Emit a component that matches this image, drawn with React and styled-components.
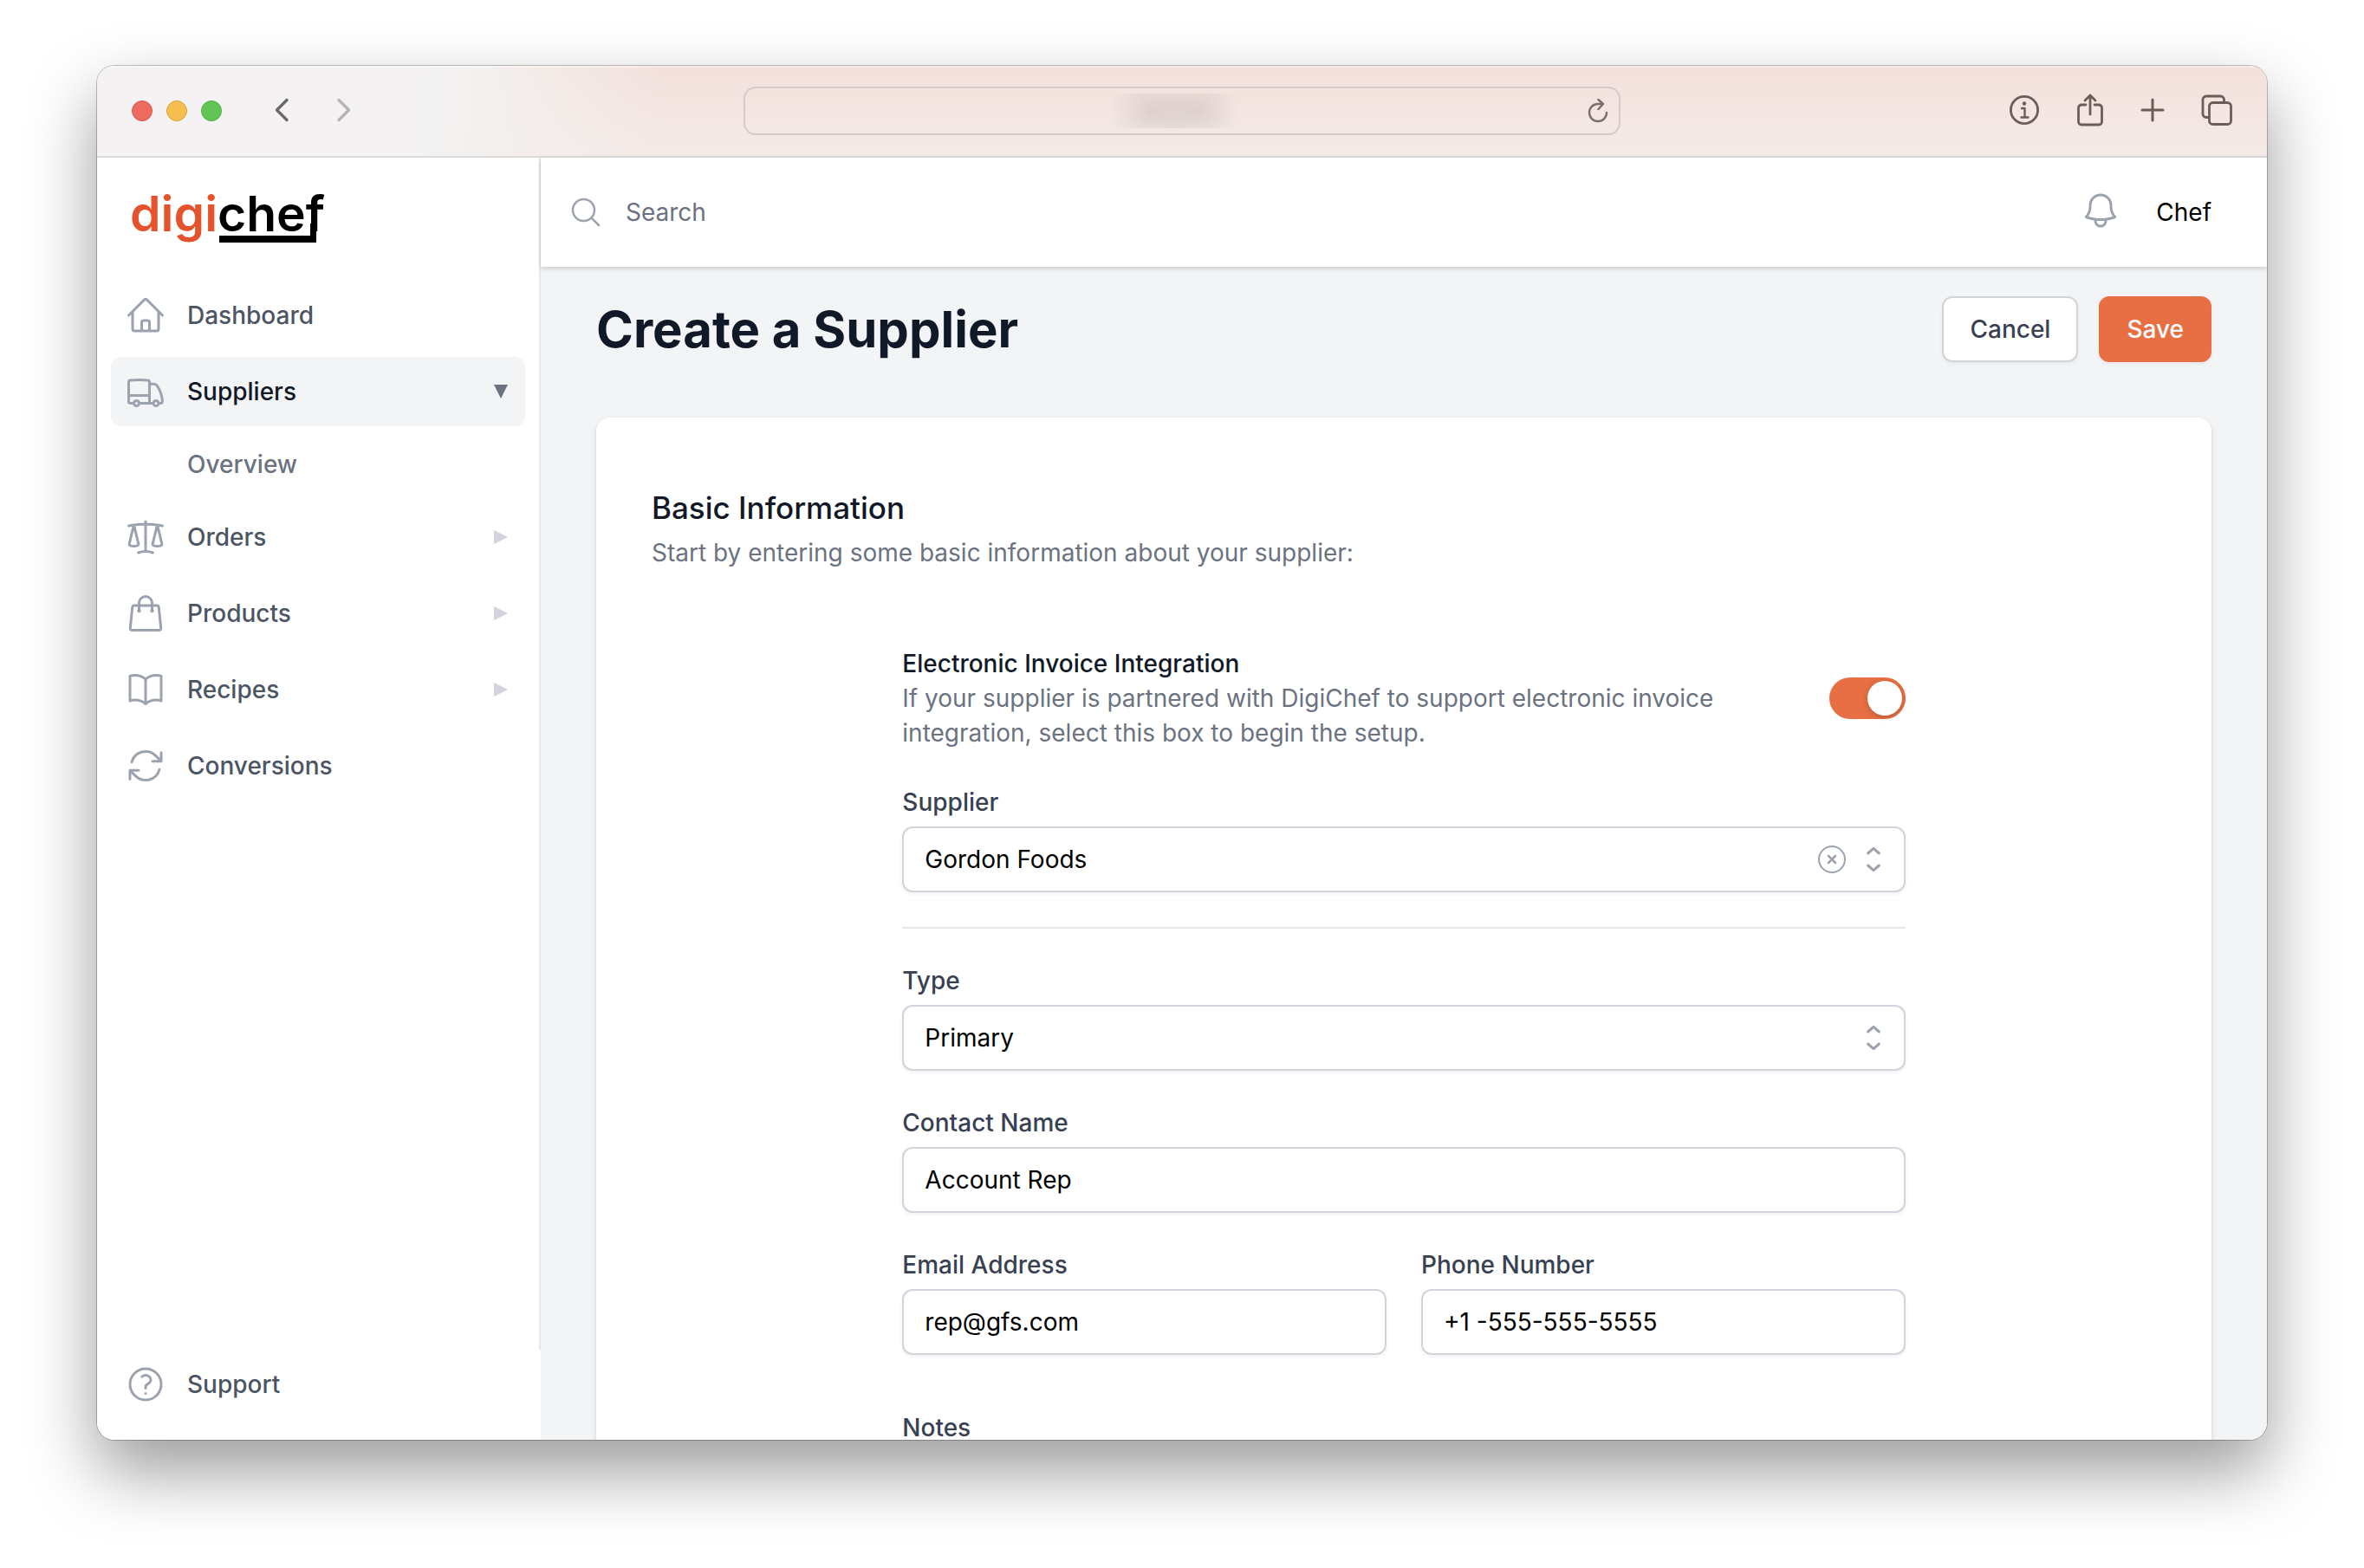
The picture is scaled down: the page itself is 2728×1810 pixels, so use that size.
import React, { useState } from 'react';
import styled, { createGlobalStyle } from 'styled-components';
import {
	HiOutlineArrowPath,
	HiOutlineBell,
	HiOutlineBookOpen,
	HiOutlineHome,
	HiOutlineMagnifyingGlass,
	HiOutlineQuestionMarkCircle,
	HiOutlineScale,
	HiOutlineShoppingBag,
	HiOutlineTruck,
} from 'react-icons/hi2';

const navItems = [
	{ name: 'Dashboard', icon: HiOutlineHome },
	{ name: 'Suppliers', icon: HiOutlineTruck, children: ['Overview'] },
	{ name: 'Orders', icon: HiOutlineScale, children: [] },
	{ name: 'Products', icon: HiOutlineShoppingBag, children: [] },
	{ name: 'Recipes', icon: HiOutlineBookOpen, children: [] },
	{ name: 'Conversions', icon: HiOutlineArrowPath },
];

const Logo = () => (
	<svg width='240' height='80' viewBox='-8 -12 240 80' role='img' aria-label='digichef'>
		<g fontFamily='Inter, sans-serif' fontWeight='600' fontSize='57'>
			<text x='-2' y='49' fill='#e5532d'>
				digi
			</text>
			<text x='99' y='49' fill='#000'>
				chef
			</text>
		</g>
		<path d='M101 54h105V40h7v22H101z' fill='#000' />
	</svg>
);

const Selector = () => (
	<svg
		width='40'
		height='40'
		viewBox='0 0 20 20'
		fill='none'
		stroke='currentColor'
		strokeWidth='1.5'
		strokeLinecap='round'
		strokeLinejoin='round'
		aria-hidden='true'
	>
		<path d='M6.8 6.5 10 3.7l3.2 2.8M6.8 13.5l3.2 2.8 3.2-2.8' />
	</svg>
);

const BrowserBar = () => (
	<Toolbar>
		<ToolGroup>
			<Lights>
				<Light $color='#ec6a5f' $edge='#d5574c' />
				<Light $color='#f5bf4f' $edge='#d8a13c' />
				<Light $color='#61c554' $edge='#50a845' />
			</Lights>
			<History>
				<ToolButton aria-label='Back' $color='#6a6868'>
					<svg width='24' height='32' viewBox='0 0 24 32'>
						<path d='M19 4.500 7.500 16 19 27.500' strokeWidth='3.400' />
					</svg>
				</ToolButton>
				<ToolButton aria-label='Forward' $color='#b6b3b4'>
					<svg width='24' height='32' viewBox='0 0 24 32'>
						<path d='M7 4.500 18.500 16 7 27.500' strokeWidth='3.400' />
					</svg>
				</ToolButton>
			</History>
		</ToolGroup>
		<Address>
			<Host />
			<ToolButton aria-label='Reload' $color='#7b6f6d'>
				<svg width='24' height='28' viewBox='0 0 24 28'>
					<path d='M22 16A10 10 0 1 1 12 6h6M12.500 1 18 6l-5.500 6' strokeWidth='2.400' />
				</svg>
			</ToolButton>
		</Address>
		<Actions>
			<ToolButton aria-label='Page info' $color='#6d5d59'>
				<svg width='36' height='36' viewBox='0 0 36 36'>
					<circle cx='18' cy='18' r='15.600' strokeWidth='2.800' />
					<circle cx='18' cy='10.500' r='2.200' fill='currentColor' stroke='none' />
					<path d='M15 16h3.500v10M14.500 26.500h8' strokeWidth='2.400' />
				</svg>
			</ToolButton>
			<ToolButton aria-label='Share' $color='#6d5d59'>
				<svg width='32' height='40' viewBox='0 0 32 40'>
					<path
						d='M11 14H6a3.500 3.500 0 0 0-3.500 3.500v16A3.500 3.500 0 0 0 6 37h20a3.500 3.500 0 0 0 3.500-3.500v-16A3.500 3.500 0 0 0 26 14h-5M16 25V3M10 9l6-6 6 6'
						strokeWidth='2.800'
					/>
				</svg>
			</ToolButton>
			<ToolButton aria-label='New tab' $color='#6d5d59'>
				<svg width='28' height='28' viewBox='0 0 28 28'>
					<path d='M14 2v24M2 14h24' strokeWidth='3' />
				</svg>
			</ToolButton>
			<ToolButton aria-label='Show tabs' $color='#6d5d59'>
				<svg width='36' height='36' viewBox='0 0 36 36'>
					<rect x='9.500' y='9.500' width='25' height='25' rx='4' strokeWidth='2.800' />
					<path
						d='M9 26.500H6A4 4 0 0 1 2 22.500V6a4 4 0 0 1 4-4h16.500a4 4 0 0 1 4 4v3'
						strokeWidth='2.800'
					/>
				</svg>
			</ToolButton>
		</Actions>
	</Toolbar>
);

const Sidebar = () => {
	const [open, setOpen] = useState('Suppliers');

	return (
		<Aside>
			<AsideMain>
				<Brand href='#'>
					<Logo />
				</Brand>
				<Nav>
					{navItems.map(({ name, icon: Icon, children }) => (
						<React.Fragment key={name}>
							<NavItem
								$active={open === name}
								onClick={() => setOpen(open === name ? '' : name)}
							>
								<Icon />
								{name}
								{children && (
									<Caret $open={open === name} viewBox='0 0 20 20' aria-hidden='true'>
										<path d='M6 6L14 10L6 14V6Z' fill='currentColor' />
									</Caret>
								)}
							</NavItem>
							{open === name &&
								children?.map((child) => (
									<SubItem key={child} href='#'>
										{child}
									</SubItem>
								))}
						</React.Fragment>
					))}
				</Nav>
			</AsideMain>
			<AsideFooter>
				<NavItem>
					<HiOutlineQuestionMarkCircle />
					Support
				</NavItem>
			</AsideFooter>
		</Aside>
	);
};

const SupplierForm = () => {
	const [supplier, setSupplier] = useState('gordon');

	return (
		<Card>
			<CardTitle>Basic Information</CardTitle>
			<CardText>Start by entering some basic information about your supplier:</CardText>
			<Fields>
				<SwitchRow>
					<div>
						<SwitchLabel htmlFor='integration'>Electronic Invoice Integration</SwitchLabel>
						<SwitchText id='integration-text'>
							If your supplier is partnered with DigiChef to support electronic invoice
							integration, select this box to begin the setup.
						</SwitchText>
					</div>
					<Switch
						id='integration'
						type='checkbox'
						role='switch'
						aria-describedby='integration-text'
						defaultChecked
					/>
				</SwitchRow>
				<Field>
					<Label htmlFor='supplier'>Supplier</Label>
					<SelectWrap>
						<Select
							id='supplier'
							value={supplier}
							onChange={(e) => setSupplier(e.target.value)}
						>
							<option value='' />
							<option value='gordon'>Gordon Foods</option>
						</Select>
						<SelectIcons>
							<ClearButton
								type='button'
								aria-label='Clear supplier'
								onClick={() => setSupplier('')}
							>
								<svg width='32' height='32' viewBox='0 0 32 32' fill='none' stroke='currentColor'>
									<circle cx='16' cy='16' r='15' strokeWidth='2' />
									<path d='m12 12 8 8m0-8-8 8' strokeWidth='2.600' strokeLinecap='round' />
								</svg>
							</ClearButton>
							<Selector />
						</SelectIcons>
					</SelectWrap>
				</Field>
				<Divider />
				<Field>
					<Label htmlFor='type'>Type</Label>
					<SelectWrap>
						<Select id='type' defaultValue='primary'>
							<option value='primary'>Primary</option>
						</Select>
						<SelectIcons>
							<Selector />
						</SelectIcons>
					</SelectWrap>
				</Field>
				<Field>
					<Label htmlFor='contact'>Contact Name</Label>
					<Input id='contact' type='text' defaultValue='Account Rep' />
				</Field>
				<Columns>
					<Field>
						<Label htmlFor='email'>Email Address</Label>
						<Input id='email' type='email' defaultValue='rep@gfs.com' />
					</Field>
					<Field>
						<Label htmlFor='phone'>Phone Number</Label>
						<Input id='phone' type='tel' defaultValue='+1 -555-555-5555' />
					</Field>
				</Columns>
				<NotesField>
					<Label htmlFor='notes'>Notes</Label>
					<Notes id='notes' />
				</NotesField>
			</Fields>
		</Card>
	);
};

const App = () => (
	<>
		<GlobalStyle />
		<Desktop>
			<Window>
				<BrowserBar />
				<Layout>
					<Sidebar />
					<Content>
						<TopBar>
							<HiOutlineMagnifyingGlass />
							<SearchInput type='search' placeholder='Search' aria-label='Search' />
							<BellButton aria-label='View notifications'>
								<HiOutlineBell />
							</BellButton>
							<UserButton>Chef</UserButton>
						</TopBar>
						<Main>
							<PageHeader>
								<h1>Create a Supplier</h1>
								<Button>Cancel</Button>
								<Button $primary>Save</Button>
							</PageHeader>
							<SupplierForm />
						</Main>
					</Content>
				</Layout>
			</Window>
		</Desktop>
	</>
);

export default App;

const GlobalStyle = createGlobalStyle`
	*,
	*::before,
	*::after {
		box-sizing: border-box;
	}
	body {
		margin: 0;
		background: #fff;
		font-family: Inter, sans-serif;
		font-size: 28px;
		line-height: 40px;
		color: #111827;
		-webkit-font-smoothing: antialiased;
	}
	h1,
	h2,
	p {
		margin: 0;
	}
	button,
	input,
	select,
	textarea {
		font: inherit;
		color: inherit;
	}
	button {
		margin: 0;
		padding: 0;
		border: none;
		background: none;
		cursor: pointer;
	}
	a {
		color: inherit;
		text-decoration: none;
	}
	svg {
		display: block;
		flex-shrink: 0;
	}
`;

const Desktop = styled.div`
	display: flex;
	height: 100vh;
	padding: 76px 112px 148px;
	overflow: hidden;
`;

const Window = styled.div`
	display: flex;
	flex-direction: column;
	flex: 1;
	min-width: 0;
	border-radius: 20px;
	overflow: hidden;
	background: #fff;
	box-shadow: 0 0 0 1px rgba(0, 0, 0, 0.24), 0 36px 80px rgba(0, 0, 0, 0.4);
`;

const Toolbar = styled.header`
	display: grid;
	grid-template-columns: 1fr minmax(0, 1012px) 1fr;
	align-items: center;
	flex-shrink: 0;
	height: 106px;
	padding: 0 40px;
	border-bottom: 2px solid #dcd9d9;
	background: linear-gradient(
			97deg,
			#f4f2f3 15%,
			#f3f2f0 17%,
			rgba(243, 240, 238, 0.7) 20%,
			rgba(243, 236, 233, 0) 26%
		),
		linear-gradient(#f3e0db, #f4e5e1 45%, #f4eae8);
	box-shadow: inset 0 2px rgba(255, 255, 255, 0.4);
`;

const ToolGroup = styled.div`
	display: flex;
	align-items: center;
	gap: 56px;
`;

const Lights = styled.div`
	display: flex;
	gap: 16px;
`;

const Light = styled.span`
	width: 24px;
	height: 24px;
	border: 1px solid ${({ $edge }) => $edge};
	border-radius: 50%;
	background: ${({ $color }) => $color};
`;

const History = styled.div`
	display: flex;
	gap: 48px;
	padding-bottom: 2px;
`;

const ToolButton = styled.button`
	color: ${({ $color }) => $color};
	svg {
		fill: none;
		stroke: currentColor;
		stroke-linecap: round;
		stroke-linejoin: round;
	}
`;

const Address = styled.div`
	display: grid;
	grid-template-columns: 1fr auto 1fr;
	align-items: center;
	height: 56px;
	padding: 0 12px;
	border: 2px solid #d8cac7;
	border-radius: 14px;
	button {
		grid-column: 3;
		justify-self: end;
	}
`;

// the host name stays unreadable, only a grey smudge shows
const Host = styled.span`
	grid-column: 2;
	width: 176px;
	height: 40px;
	background: radial-gradient(ellipse 48px 44px at 30% 50%, rgba(120, 110, 108, 0.18), transparent),
		radial-gradient(ellipse 48px 44px at 60% 50%, rgba(120, 110, 108, 0.18), transparent);
`;

const Actions = styled.div`
	display: flex;
	align-items: center;
	justify-content: flex-end;
	gap: 42px;
	padding-bottom: 2px;
`;

const Layout = styled.div`
	display: flex;
	flex: 1;
	min-height: 0;
`;

const Aside = styled.aside`
	display: flex;
	flex-direction: column;
	flex-shrink: 0;
	width: 512px;
	background: #fff;
`;

const AsideMain = styled.div`
	flex: 1;
	min-height: 0;
	padding: 24px 16px 0;
	border-right: 2px solid #e5e7eb;
`;

const AsideFooter = styled.div`
	padding: 0 16px 24px;
`;

const Brand = styled.a`
	display: block;
	padding: 0 16px 38px;
`;

const Nav = styled.nav`
	display: flex;
	flex-direction: column;
	gap: 8px;
`;

const NavItem = styled.button`
	display: flex;
	align-items: center;
	gap: 24px;
	width: 100%;
	height: 80px;
	padding: 0 8px 0 16px;
	border-radius: 12px;
	background: ${({ $active }) => ($active ? '#f3f4f6' : 'transparent')};
	color: ${({ $active }) => ($active ? '#111827' : '#4b5563')};
	font-weight: 500;
	text-align: left;
	> svg:first-child {
		width: 48px;
		height: 48px;
		color: #9ca3af;
	}
`;

const Caret = styled.svg`
	width: 40px;
	height: 40px;
	margin-left: auto;
	color: ${({ $open }) => ($open ? '#6b7280' : '#d1d5db')};
	transform: ${({ $open }) => ($open ? 'rotate(90deg)' : 'none')};
`;

const SubItem = styled.a`
	padding: 16px 16px 16px 88px;
	border-radius: 12px;
	color: #6b7280;
	font-weight: 500;
`;

const Content = styled.div`
	display: flex;
	flex-direction: column;
	flex: 1;
	min-width: 0;
	background: #f3f4f6;
`;

const TopBar = styled.div`
	display: flex;
	align-items: center;
	flex-shrink: 0;
	height: 126px;
	padding: 0 64px 0 32px;
	background: #fff;
	box-shadow: 0 2px 6px rgba(0, 0, 0, 0.1), 0 2px 4px rgba(0, 0, 0, 0.08);
	> svg {
		width: 40px;
		height: 40px;
		color: #9ca3af;
	}
`;

const SearchInput = styled.input`
	flex: 1;
	min-width: 0;
	height: 80px;
	padding: 0 26px;
	border: none;
	outline: none;
	background: transparent;
	&::placeholder {
		color: #6b7280;
		opacity: 1;
	}
`;

const BellButton = styled.button`
	margin-right: 40px;
	padding-bottom: 4px;
	color: #9ca3af;
	svg {
		width: 48px;
		height: 48px;
	}
`;

const UserButton = styled.button`
	color: #000;
`;

const Main = styled.main`
	flex: 1;
	min-height: 0;
	padding: 34px 64px 0;
	overflow: hidden;
`;

const PageHeader = styled.div`
	display: flex;
	align-items: center;
	gap: 24px;
	margin-bottom: 64px;
	h1 {
		flex: 1;
		font-size: 58px;
		line-height: 72px;
		font-weight: 700;
	}
`;

const Button = styled.button`
	height: 76px;
	padding: 0 30px;
	border: 2px solid ${({ $primary }) => ($primary ? '#e76f43' : '#d1d5db')};
	border-radius: 12px;
	background: ${({ $primary }) => ($primary ? '#e76f43' : '#fff')};
	color: ${({ $primary }) => ($primary ? '#fff' : '#374151')};
	font-weight: 500;
	box-shadow: 0 2px 4px rgba(0, 0, 0, 0.05);
`;

const Card = styled.section`
	padding: 80px 64px;
	border-radius: 16px;
	background: #fff;
	box-shadow: 0 2px 6px rgba(0, 0, 0, 0.1), 0 2px 4px rgba(0, 0, 0, 0.06);
`;

const CardTitle = styled.h2`
	font-size: 35px;
	line-height: 48px;
	font-weight: 500;
`;

const CardText = styled.p`
	margin-top: 8px;
	color: #6b7280;
`;

const Fields = styled.div`
	display: flex;
	flex-direction: column;
	gap: 40px;
	width: calc(100% * 2 / 3);
	margin: 88px auto 0;
`;

const SwitchRow = styled.div`
	display: flex;
	align-items: center;
	justify-content: space-between;
	gap: 32px;
`;

const SwitchLabel = styled.label`
	display: block;
	font-weight: 500;
`;

const SwitchText = styled.p`
	color: #6b7280;
`;

const Switch = styled.input`
	appearance: none;
	flex-shrink: 0;
	width: 88px;
	height: 48px;
	margin: 0;
	padding: 4px;
	border-radius: 24px;
	background: #e5e7eb;
	cursor: pointer;
	&::before {
		content: '';
		display: block;
		width: 40px;
		height: 40px;
		border-radius: 50%;
		background: #fff;
		box-shadow: 0 2px 6px rgba(0, 0, 0, 0.2);
	}
	&:checked {
		background: #e76f43;
	}
	&:checked::before {
		margin-left: auto;
	}
`;

const Field = styled.div`
	display: flex;
	flex-direction: column;
	gap: 8px;
	min-width: 0;
`;

const NotesField = styled(Field)`
	margin-top: 24px;
`;

const Label = styled.label`
	color: #374151;
	font-weight: 500;
`;

const Input = styled.input`
	width: 100%;
	height: 76px;
	padding: 0 24px;
	border: 2px solid #d1d5db;
	border-radius: 12px;
	background: #fff;
	color: #000;
	box-shadow: 0 2px 4px rgba(0, 0, 0, 0.06);
`;

const Select = styled(Input).attrs({ as: 'select' })`
	appearance: none;
	padding-right: 128px;
`;

const Notes = styled(Input).attrs({ as: 'textarea' })`
	height: 192px;
	padding: 16px 24px;
	resize: none;
`;

const SelectWrap = styled.div`
	position: relative;
`;

const SelectIcons = styled.div`
	position: absolute;
	top: 0;
	right: 17px;
	bottom: 0;
	display: flex;
	align-items: center;
	gap: 12px;
	color: #9ca3af;
	pointer-events: none;
`;

const ClearButton = styled.button`
	color: inherit;
	pointer-events: auto;
`;

const Divider = styled.hr`
	width: 100%;
	margin: 0;
	border: none;
	border-top: 2px solid #e5e7eb;
`;

const Columns = styled.div`
	display: grid;
	grid-template-columns: 1fr 1fr;
	gap: 40px;
`;
